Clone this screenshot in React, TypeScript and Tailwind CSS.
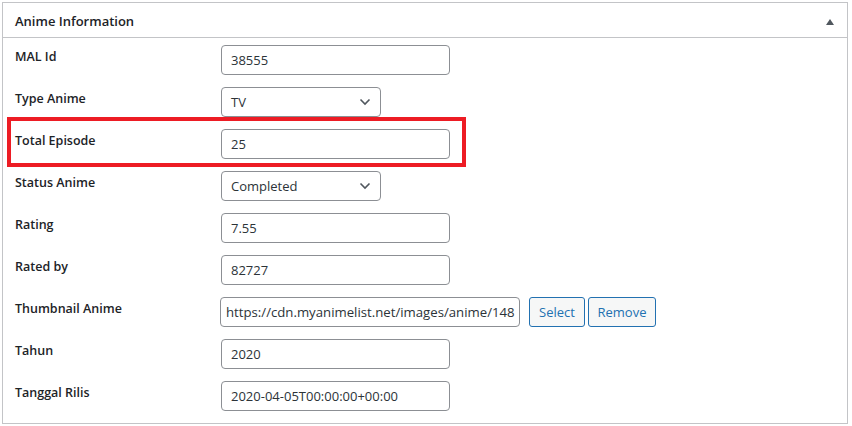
const fields = [
  { label: 'MAL Id', value: '38555', kind: 'text' },
  { label: 'Type Anime', value: 'TV', kind: 'select' },
  { label: 'Total Episode', value: '25', kind: 'text', marked: true },
  { label: 'Status Anime', value: 'Completed', kind: 'select' },
  { label: 'Rating', value: '7.55', kind: 'text' },
  { label: 'Rated by', value: '82727', kind: 'text' },
  { label: 'Thumbnail Anime', value: 'https://cdn.myanimelist.net/images/anime/148', kind: 'image' },
  { label: 'Tahun', value: '2020', kind: 'text' },
  { label: 'Tanggal Rilis', value: '2020-04-05T00:00:00+00:00', kind: 'text' },
];

function Chevron() {
  return (
    <svg width="12" height="8" viewBox="0 0 12 8" className="absolute right-[9px] top-[10px]">
      <polyline points="1.5,1.5 6,6 10.5,1.5" fill="none" stroke="#50575e" strokeWidth="1.6" />
    </svg>
  );
}

function Field({ field }: { field: (typeof fields)[number] }) {
  if (field.kind === 'select') {
    return (
      <div className="relative flex h-[30px] w-[160px] items-center rounded-[4px] border border-[#8c8f94] bg-white pl-[9px] pt-[2px] text-[13px] text-[#2c3338]">
        {field.value}
        <Chevron />
      </div>
    );
  }
  if (field.kind === 'image') {
    return (
      <div className="ml-[-1px] flex items-center">
        <div className="flex h-[30px] w-[300px] items-center whitespace-nowrap rounded-[4px] border border-[#8c8f94] bg-white pl-[5px] pt-[2px] text-[13.2px] text-[#2c3338]">
          {field.value}
        </div>
        <button className="ml-[9px] h-[30px] w-[56px] rounded-[3px] border border-[#2271b1] bg-[#f6f7f7] pt-[1px] text-[13px] text-[#2271b1]">
          Select
        </button>
        <button className="ml-[3px] h-[30px] w-[68px] rounded-[3px] border border-[#2271b1] bg-[#f6f7f7] pt-[1px] text-[13px] text-[#2271b1]">
          Remove
        </button>
      </div>
    );
  }
  return (
    <div className="flex h-[30px] w-[229px] items-center rounded-[4px] border border-[#8c8f94] bg-white pl-[9px] pt-[2px] text-[13px] text-[#2c3338]">
      {field.value}
    </div>
  );
}

export default function App() {
  return (
    <div className="min-h-[426px] bg-white p-[2px] font-['Open_Sans',sans-serif]">
      <div className="w-[846px] border border-[#c3c4c7] bg-white">
        {/* Header */}
        <div className="flex h-[35px] items-center justify-between border-b border-[#c3c4c7] pl-[12px] pr-[13px] pt-[3px]">
          <h2 className="text-[13px] font-semibold text-[#1d2327]">Anime Information</h2>
          <svg width="8" height="6" viewBox="0 0 8 6">
            <polygon points="0,6 4,0 8,6" fill="#50575e" />
          </svg>
        </div>

        {/* Fields */}
        <div className="flex flex-col gap-[12px] px-[12px] pb-[12px] pt-[7px]">
          {fields.map((field) => (
            <div key={field.label} className="relative flex h-[30px] items-start">
              {field.marked && (
                <div className="absolute left-[-8px] top-[-12px] h-[50px] w-[459px] border-[4px] border-[#ed1c24]" />
              )}
              <label className="w-[206px] pt-[2px] text-[12.5px] font-semibold leading-5 text-[#1d2327]">
                {field.label}
              </label>
              <Field field={field} />
            </div>
          ))}
        </div>
      </div>
    </div>
  );
}
